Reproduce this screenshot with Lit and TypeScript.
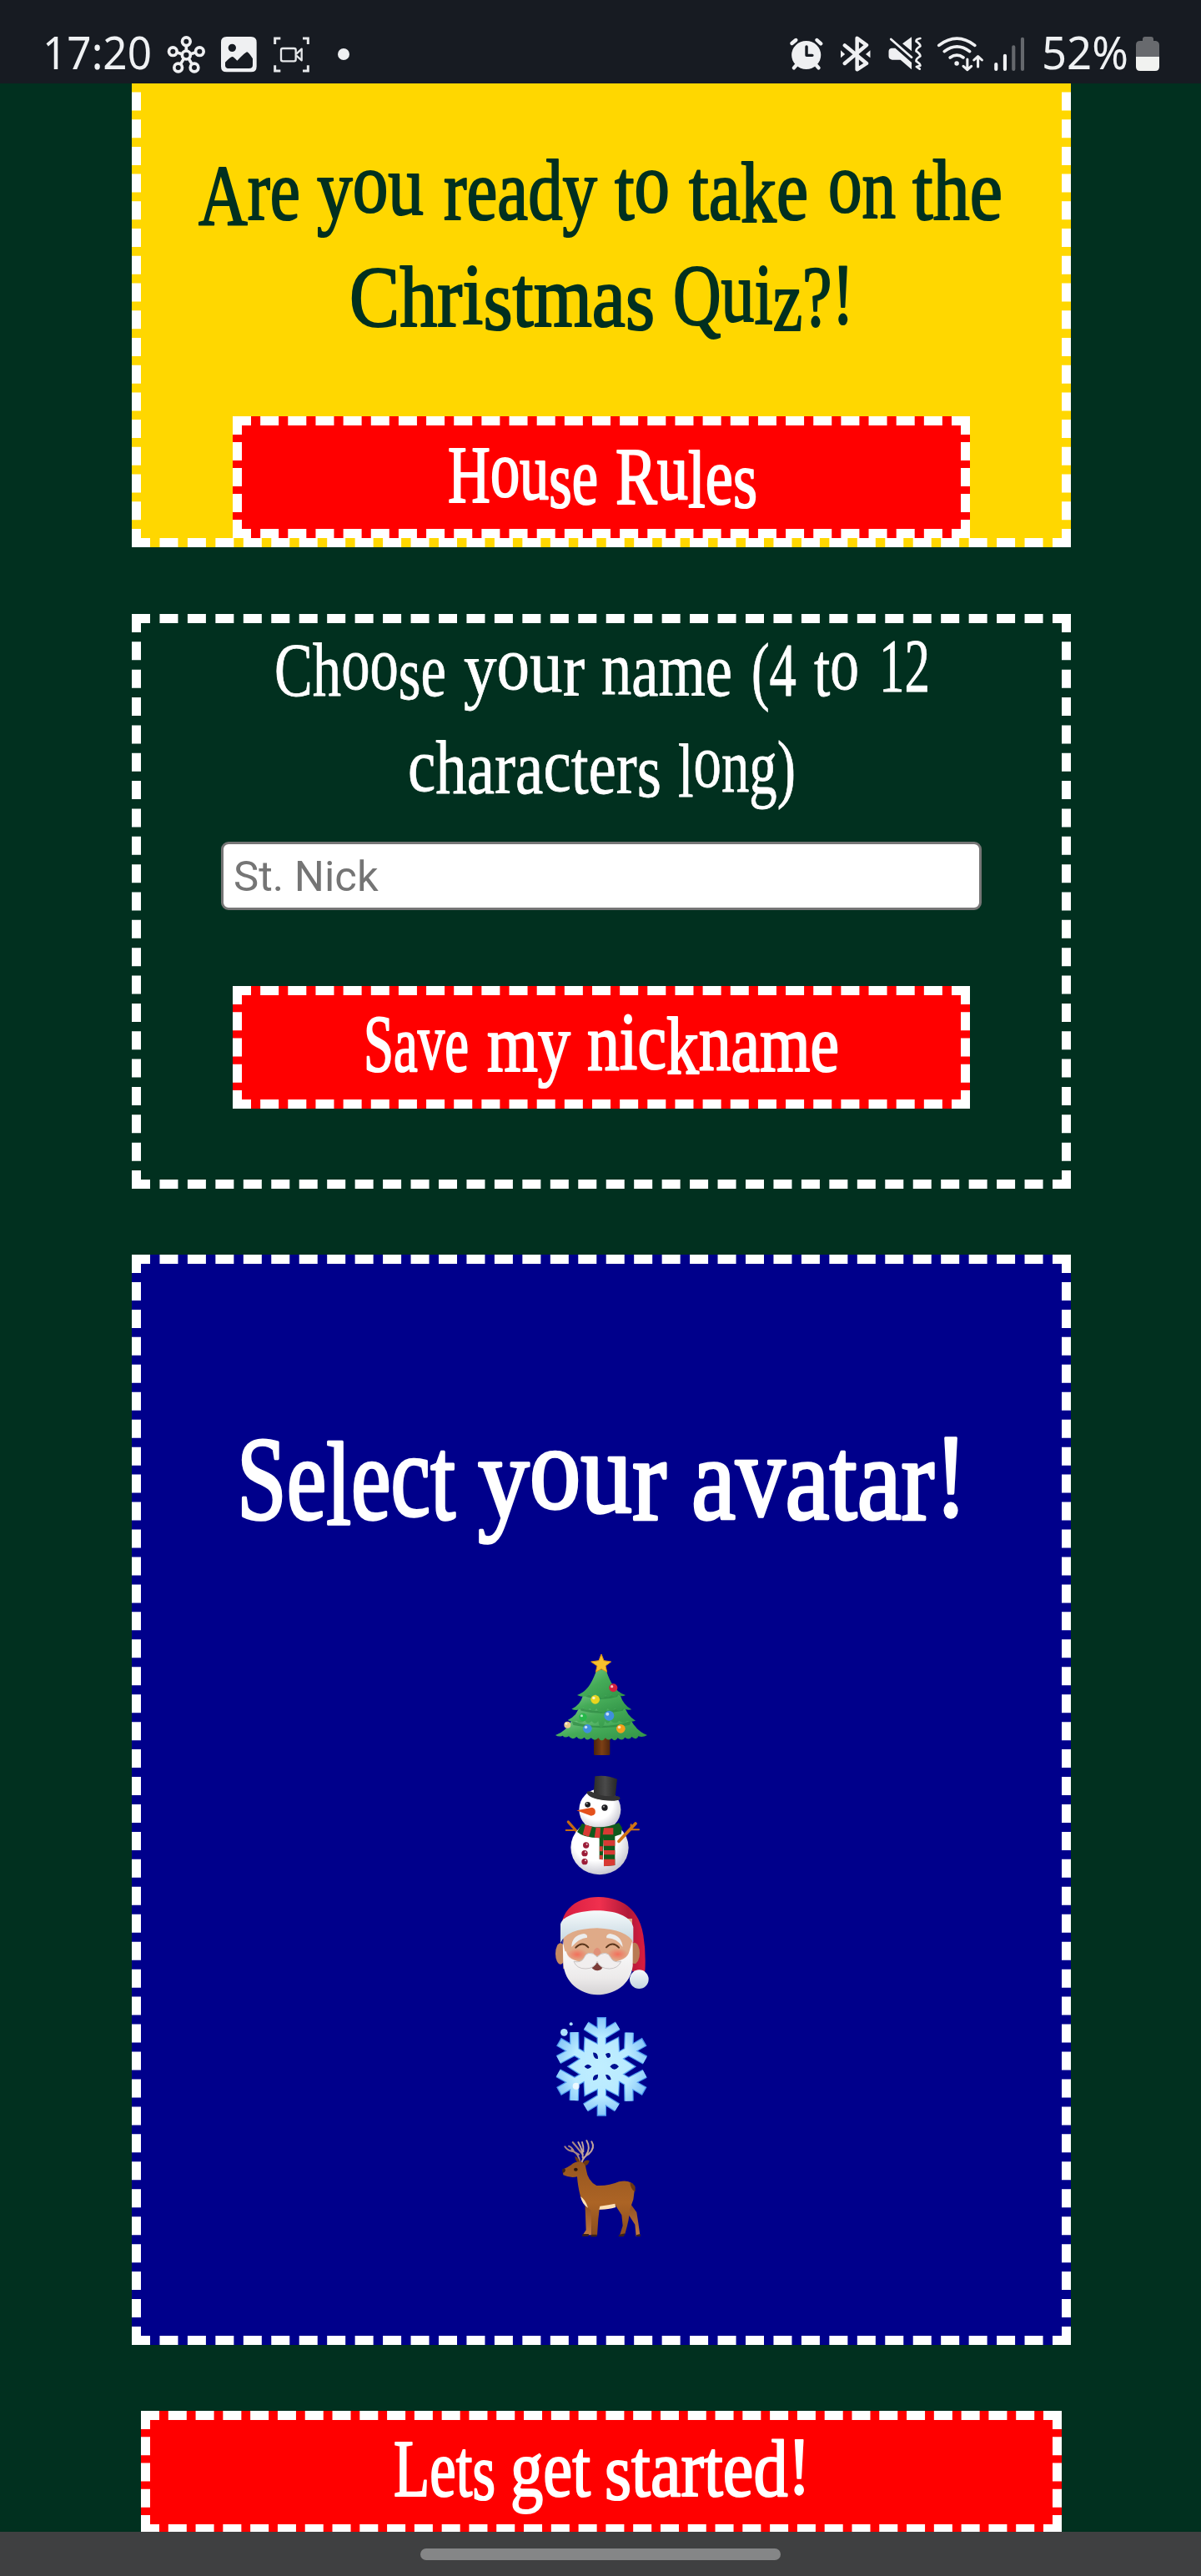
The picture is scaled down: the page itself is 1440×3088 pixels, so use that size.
import { LitElement, html, svg, css } from "lit";
import { customElement } from "lit/decorators.js";

/** A word with its left and right edge on the line. */
type Word = [string, number, number];

/** Vertical bounce of the lettering, as a fraction of the font size. */
const BOUNCE: Record<string, number> = {
  o: -0.09, u: -0.06, n: -0.02, v: -0.03, A: 0.07, y: -0.01, s: 0.04, l: 0.04,
  k: 0.03, H: -0.02, Q: -0.02, S: 0, z: 0.05, "!": -0.03, "1": -0.05, "2": -0.05, c: -0.03, i: -0.03,
};

const bounce = (word: string, size: number) => {
  let last = 0;
  return [...word]
    .map((ch) => {
      const off = (BOUNCE[ch] ?? 0) * size;
      const d = off - last;
      last = off;
      return d.toFixed(1);
    })
    .join(" ");
};

const line = (words: Word[], baseline: number, size: number) => svg`
  <text font-size=${size} y=${baseline}>${words.map(
    ([w, x1, x2]) => svg`<tspan x=${x1} y=${baseline} dy=${bounce(w, size)} textLength=${x2 - x1} lengthAdjust="spacingAndGlyphs">${w}</tspan> `
  )}</text>`;

const BALLS: [number, number, number, string][] = [
  [346, 190, 15, "#d5213f"], [281, 232, 16, "#e8d51f"], [237, 295, 14, "#27b84a"],
  [331, 290, 18, "#3f8fdd"], [253, 337, 16, "#3f8fdd"], [373, 337, 16, "#f3a01c"], [181, 323, 12, "#e8c98c"],
];

const tree = () => svg`
  <defs>
    <linearGradient id="leaf" x1="0" x2="1" y1="0" y2="1"><stop offset="0" stop-color="#7cc98a"/><stop offset=".45" stop-color="#45ab58"/><stop offset="1" stop-color="#2f9145"/></linearGradient>
    <linearGradient id="trunk" x1="0" x2="1"><stop offset="0" stop-color="#4a220e"/><stop offset=".5" stop-color="#7c3f14"/><stop offset="1" stop-color="#4e240e"/></linearGradient>
  </defs>
  <rect x="276" y="360" width="58" height="72" rx="4" fill="url(#trunk)"/>
  <path fill="url(#leaf)" d="M138 360Q180 345 200 300H406Q428 345 468 360Q452 370 436 364Q432 380 412 366Q404 380 388 368Q378 384 362 370Q354 386 340 372Q326 382 318 370Q304 388 292 370Q280 384 266 370Q250 384 242 368Q226 382 214 366Q198 380 186 364Q172 372 164 362Q150 368 138 360Z"/>
  <path fill="#27803c" d="M196 308Q300 346 412 308L404 324Q300 344 202 324Z" opacity=".6"/>
  <path fill="url(#leaf)" d="M182 306Q218 290 226 250H384Q394 290 426 308Q408 314 396 308Q382 322 368 308Q352 324 336 308Q326 326 316 310Q310 336 300 332Q294 328 292 310Q280 326 268 310Q254 324 244 308Q226 322 214 308Q196 314 182 306Z"/>
  <path fill="#27803c" d="M222 258Q300 288 388 258L380 272Q300 290 230 272Z" opacity=".6"/>
  <path fill="url(#leaf)" d="M196 266Q232 250 240 205H368Q378 250 412 268Q396 272 382 264Q366 280 352 264Q338 280 326 264Q314 286 302 276Q292 280 286 264Q272 284 262 264Q248 276 238 262Q216 276 196 266Z"/>
  <path fill="#27803c" d="M240 208Q300 234 368 208L360 222Q304 240 248 222Z" opacity=".6"/>
  <path fill="url(#leaf)" d="M216 216C258 202 272 160 284 132Q303 116 322 132C334 168 354 206 390 216Q376 224 362 214Q350 230 338 214Q328 232 318 216Q308 238 298 222Q288 226 282 212Q270 230 260 214Q244 228 216 216Z"/>
  <path fill="#f7c02d" stroke="#dc9312" stroke-width="3" stroke-linejoin="round" d="M303 69L312 92L338 96L318 111L323 133L303 122L283 133L288 111L266 96L294 92Z"/>
  ${BALLS.map(([x, y, r, c]) => svg`<circle cx=${x} cy=${y} r=${r} fill=${c}/><circle cx=${x - r / 3} cy=${y - r / 3} r=${r / 3} fill="#fff" opacity=".7"/>`)}`;

const snowman = () => svg`
  <defs>
    <radialGradient id="snow" cx=".42" cy=".35" r=".65"><stop offset=".6" stop-color="#fff"/><stop offset="1" stop-color="#c9c9d2"/></radialGradient>
    <linearGradient id="hat" x1="0" x2="1"><stop offset="0" stop-color="#2a2a2a"/><stop offset=".5" stop-color="#4a4a4a"/><stop offset="1" stop-color="#262626"/></linearGradient>
    <clipPath id="scarf"><path d="M234 677Q296 706 366 675L378 694L374 716L352 724V828L312 832V728L308 808L296 806V730Q240 730 216 708Z"/></clipPath>
  </defs>
  <g stroke="#c46a12" stroke-linecap="round" fill="none"><path stroke-width="10" d="M184 672L216 708"/><path stroke-width="6" d="M176 702H204"/></g>
  <ellipse cx="297" cy="764" rx="104" ry="98" fill="url(#snow)"/>
  <circle cx="298" cy="628" r="75" fill="url(#snow)"/>
  <g clip-path="url(#scarf)">
    <rect x="210" y="660" width="180" height="180" fill="#0f5a1c"/>
    <path fill="#d83a34" d="M246 680l24 8-12 38-22-8zM284 692l16 2-2 36-20-2zM312 694h34v24h-38zM310 738h46v20h-46zM310 774h46v16h-46zM310 806h46v30h-46zM296 760h12v18h-12zM296 792h12v20h-12z"/>
  </g>
  <g stroke="#d07514" stroke-linecap="round" fill="none"><path stroke-width="11" d="M366 742L426 678"/><path stroke-width="6" d="M404 700H438M410 696V682"/></g>
  <path fill="url(#hat)" d="M280 508Q320 502 360 518L352 590Q312 600 274 584Z"/>
  <path fill="#343434" d="M250 566Q256 558 274 566Q312 584 354 578Q374 580 370 590Q356 600 310 594Q256 586 250 566Z"/>
  <circle cx="254" cy="610" r="10" fill="#1c1c20"/><circle cx="315" cy="621" r="11" fill="#1c1c20"/>
  <circle cx="251" cy="606" r="3" fill="#aaa"/><circle cx="312" cy="617" r="3" fill="#aaa"/>
  <path fill="#e4511c" d="M214 631L270 620Q284 624 281 640Q278 650 266 650Z"/>
  <g fill="#9c1c38"><circle cx="248" cy="756" r="11"/><circle cx="243" cy="785" r="11"/><circle cx="243" cy="815" r="11"/></g>
  <g fill="#fff" opacity=".8"><circle cx="251" cy="752" r="3"/><circle cx="246" cy="781" r="3"/><circle cx="246" cy="811" r="3"/></g>`;

const santa = () => svg`
  <defs>
    <linearGradient id="red" x1="0" x2="1"><stop offset="0" stop-color="#d61c40"/><stop offset=".45" stop-color="#f0304e"/><stop offset=".8" stop-color="#b01838"/><stop offset="1" stop-color="#dc1c40"/></linearGradient>
    <linearGradient id="fur" x1="0" x2="0" y1="0" y2="1"><stop offset="0" stop-color="#f6fafb"/><stop offset="1" stop-color="#c4d6e0"/></linearGradient>
    <linearGradient id="beard" x1="0" x2="0" y1="0" y2="1"><stop offset="0" stop-color="#fff"/><stop offset=".7" stop-color="#eceaea"/><stop offset="1" stop-color="#d4d2d4"/></linearGradient>
    <radialGradient id="cheek"><stop offset="0" stop-color="#f2705c"/><stop offset="1" stop-color="#f2705c" stop-opacity="0"/></radialGradient>
  </defs>
  <path fill="url(#red)" d="M160 140C170 74 230 42 292 42C386 44 440 92 454 180Q464 240 460 310H414L400 150Z"/>
  <ellipse cx="156" cy="246" rx="18" ry="38" fill="#c48862"/><ellipse cx="422" cy="244" rx="19" ry="38" fill="#b87a54"/>
  <path fill="#dfaa88" d="M166 120H414V300H166Z"/>
  <path fill="url(#beard)" d="M164 195Q172 250 176 236Q184 272 240 276H336Q396 272 404 236L416 195V290C408 358 350 393 288 394C226 392 170 350 166 280Z"/>
  <ellipse cx="216" cy="249" rx="38" ry="22" fill="url(#cheek)"/><ellipse cx="362" cy="248" rx="38" ry="22" fill="url(#cheek)"/>
  <path fill="#7c3c38" d="M262 286Q288 272 314 286Q304 308 288 307Q270 306 262 286Z"/>
  <path fill="#f1eeee" stroke="#c9c4c4" stroke-width="3" d="M288 258Q276 242 258 244Q246 246 240 262Q230 280 204 274Q214 300 246 300Q278 300 288 274Q298 300 332 300Q362 300 374 274Q348 280 338 262Q330 244 316 244Q300 244 288 258Z"/>
  <path fill="#e09078" d="M274 242Q278 226 288 224Q298 226 302 242Q294 254 288 252Q280 254 274 242Z"/>
  <path fill="#ececec" d="M196 222Q196 180 240 174Q254 176 252 188Q222 190 196 222ZM380 222Q376 180 334 174Q318 178 322 190Q356 188 380 222Z"/>
  <path fill="none" stroke="#5a361c" stroke-width="6" stroke-linecap="round" d="M211 224Q234 200 256 223M321 223Q344 200 366 224"/>
  <path fill="url(#fur)" d="M156 140C172 80 398 66 418 150V206Q396 160 288 154Q178 156 156 208Z"/>
  <circle cx="439" cy="338" r="34" fill="url(#fur)"/>`;

const ARMS = [0, 60, 120, 180, 240, 300];
const STAR = ARMS.flatMap((a) =>
  [[a, 118], [a + 30, 72]].map(([deg, r]) => {
    const t = (deg * Math.PI) / 180;
    return `${(304 + r * Math.cos(t)).toFixed(1)},${(652 + r * Math.sin(t)).toFixed(1)}`;
  })
).join(" ");

const snowflake = () => svg`
  <defs><radialGradient id="ice" gradientUnits="userSpaceOnUse" cx="304" cy="652" r="180"><stop offset="0" stop-color="#c0eeff"/><stop offset=".6" stop-color="#b8eaff"/><stop offset="1" stop-color="#84c4f8"/></radialGradient></defs>
  ${([["#4e9af0", 34], ["url(#ice)", 27]] as [string, number][]).map(
    ([c, w]) => svg`
      <polygon points=${STAR} fill=${c} stroke=${c} stroke-width=${w - 26}/>
      <g stroke=${c} stroke-width=${w} fill="none">
      ${ARMS.map(
        (a) => svg`<path transform="rotate(${a} 304 652)" d="M303.500 652L304 ${w === 34 ? 474 : 478}M248 505L304 540L362 505"/>`
      )}</g>`
  )}
  <path fill="#00108f" d="M334 652Q350 632 366 652Q350 672 334 652ZM242 652Q254 636 268 652Q254 668 242 652ZM273 602Q291 600 291 624Q275 626 273 602ZM318 607Q337 595 336 616Q324 630 318 607ZM273 701Q271 680 291 680Q293 702 273 701ZM318 681Q335 680 338 698Q324 706 318 681Z"/>
  <circle cx="169" cy="529" r="13" fill="#aee0ff"/><circle cx="194" cy="499" r="6" fill="#aee0ff"/><circle cx="212" cy="722" r="12" fill="#fff" opacity=".75"/>`;

const deer = () => svg`
  <defs>
    <linearGradient id="fawn" x1="0" x2="0" y1="0" y2="1"><stop offset="0" stop-color="#97561f"/><stop offset=".55" stop-color="#ac6425"/><stop offset="1" stop-color="#8b4d1d"/></linearGradient>
    <linearGradient id="leg" x1="0" x2="0" y1="0" y2="1"><stop offset="0" stop-color="#8e4e20"/><stop offset="1" stop-color="#c07840"/></linearGradient>
  </defs>
  <path fill="url(#leg)" d="M244 1140L272 1150L268 1220V1258H236L248 1240ZM404 1140L430 1176L436 1214L442 1258L428 1262L424 1220L398 1180Z"/>
  <g fill="none" stroke="#a98783" stroke-width="6" stroke-linecap="round"><path d="M226 996Q222 966 204 958Q182 956 172 940M204 958Q200 944 186 938M236 968Q214 940 200 924M222 968Q206 962 196 950"/><path stroke="#c1a39c" d="M232 998Q238 976 258 966Q282 944 268 922M236 980Q238 956 220 924M248 970Q266 946 250 918M238 958Q240 940 234 924"/></g>
  <path fill="#6b3713" d="M236 998Q246 984 260 990Q258 1006 242 1010ZM222 1000Q208 990 208 974Q224 982 228 998Z"/>
  <path fill="url(#fawn)" d="M164 1022Q180 1016 194 1006Q206 994 226 994Q246 998 248 1020Q254 1064 286 1080Q330 1082 366 1066Q408 1056 424 1084L418 1130L406 1164Q404 1200 388 1254L368 1262L380 1224L376 1186L352 1148L296 1166L292 1200L288 1260H268L266 1170Q242 1150 228 1120Q218 1080 216 1048Q192 1054 166 1042Z"/>
  <path fill="#6b3713" d="M406 1068Q428 1074 425 1102Q414 1098 408 1080Z"/>
  <path fill="#ffe1b5" d="M228 1119Q246 1130 255 1160Q234 1148 228 1119ZM298 1154Q330 1150 352 1145L355 1158Q320 1168 295 1166Z"/>
  <path fill="#3c2218" d="M163 1020Q174 1016 174 1026Q170 1036 163 1034ZM236 1254H258L256 1262H234ZM268 1256H288L286 1264H264ZM368 1256L388 1252L384 1263H364ZM428 1258L442 1254L444 1263H430Z"/>
  <ellipse cx="211" cy="1022" rx="7" ry="6" fill="#2b1710"/>`;

const AVATARS = [
  { name: "tree", top: 30, draw: tree },
  { name: "snowman", top: 468, draw: snowman },
  { name: "santa", top: 6, draw: santa },
  { name: "snowflake", top: 444, draw: snowflake },
  { name: "deer", top: 882, draw: deer },
];

@customElement("app-root")
export class AppRoot extends LitElement {
  static styles = css`
    :host { display: block; }
    * { box-sizing: border-box; }
    .screen { display: flex; flex-direction: column; width: 1440px; height: 3088px; background: #01301f; overflow: hidden; }
    svg { display: block; flex: none; overflow: visible; }
    .status { flex: none; height: 100px; display: flex; justify-content: space-between; background: #171b22; color: #eff1f3; font-family: "Noto Sans", "Open Sans", sans-serif; }
    .group { display: flex; }
    .icon { fill: #eff0f2; stroke: none; }
    .label { fill: #eff1f3; font-size: 54px; }
    .page { flex: 1; min-height: 0; overflow: hidden; display: flex; flex-direction: column; align-items: center; }
    .card { flex: none; width: 1126px; margin-left: 2px; border: 11px dashed #fff; display: flex; flex-direction: column; align-items: center; }
    .intro { height: 611px; margin-top: -55px; background: #ffd700; }
    .nickname { height: 689px; margin-top: 80px; }
    .avatars { height: 1307px; margin-top: 79px; background: #00008b; }
    .avatar { margin-right: 2px; }
    .btn { flex: none; width: 884px; height: 146px; padding: 0; border: 11px dashed #fff; background: #f00; border-radius: 0; display: flex; justify-content: center; }
    .btn.save { height: 147px; margin-top: 91px; }
    .btn.start { width: 1104px; height: 147px; margin: 79px 0 0 2px; }
    .script { font-family: "Mountains of Christmas", "Liberation Serif", serif; fill: #fff; stroke: #fff; stroke-width: 2.2px; stroke-linejoin: round; }
    .script.dark { fill: #01301f; stroke: #01301f; }
    .script.thin { stroke-width: 0.8px; }
    .script.big { stroke-width: 3.5px; }
    .field { width: 912px; height: 82px; padding: 0 12px; border: 3px solid #767676; border-radius: 9px; background: #fff; font: 50.8px/1 Roboto, sans-serif; color: #000; }
    .field::placeholder { color: #757575; opacity: 1; }
    .nav { flex: none; height: 53px; background: #3f4041; display: flex; justify-content: center; padding-top: 20px; }
    .pill { width: 432px; height: 14px; border-radius: 7px; background: #858687; }
  `;

  private statusBar() {
    return html`
      <header class="status">
        <div class="group">
          <svg width="200" height="100" viewBox="0 0 200 100"><text class="label" x="51" y="82.500" textLength="131" lengthAdjust="spacingAndGlyphs">17:20</text></svg>
          <svg class="icon" width="60" height="100" viewBox="600 0 180 300">
            <g fill="none" stroke="#eff0f2" stroke-width="11">
              <circle cx="670" cy="198" r="15"/><circle cx="670" cy="149" r="14.500"/><circle cx="622" cy="185" r="14.500"/><circle cx="718" cy="185" r="14.500"/><circle cx="641" cy="243" r="14.500"/><circle cx="699" cy="243" r="14.500"/>
              <path d="M670 164V183M637 189L655 194M703 189L685 194M650 230L661 211M690 230L679 211"/>
            </g>
          </svg>
          <svg class="icon" width="60" height="100" viewBox="780 0 180 300">
            <path fill-rule="evenodd" d="M815 132H903Q923 132 923 152V239Q923 259 903 259H815Q795 259 795 239V152Q795 132 815 132ZM835 158A14 14 0 1 0 835 186A14 14 0 1 0 835 158ZM810 224V236Q811 246 824 246H896Q909 246 909 234V211Q893 186 888 187Q884 187 853 218Q840 203 835 204Q829 205 810 224Z"/>
          </svg>
          <svg width="120" height="100" viewBox="960 0 360 300" fill="none" stroke="#e6e8ea" stroke-width="9">
            <path d="M989 159V138H1009M1089 138H1108V159M1108 235V255H1089M1009 255H989V235"/>
            <rect x="1011" y="174" width="53" height="46" rx="6" stroke-width="7"/><path stroke-width="7" stroke-linejoin="round" d="M1066 194L1085 176V217L1066 200"/>
            <circle cx="1236" cy="195" r="21" fill="#eff0f2" stroke="none"/>
          </svg>
        </div>
        <div class="group">
          <svg class="icon" width="293" height="100" viewBox="130 0 851 300" preserveAspectRatio="none">
            <circle cx="193" cy="198" r="51"/>
            <path fill="none" stroke="#eff0f2" stroke-width="13" stroke-linecap="round" d="M143 156L157 144M230 144L244 157M157 236L150 244M229 236L236 244"/>
            <path fill="none" stroke="#171b22" stroke-width="10" stroke-linecap="round" stroke-linejoin="round" d="M194 168V199H214"/>
            <path fill="none" stroke="#eff0f2" stroke-width="13" stroke-linecap="round" stroke-linejoin="round" d="M327 163L403 228L370 250V137L403 162L327 228"/>
            <path d="M313 181L328 195L313 208ZM416 181L400 195L416 208Z"/>
            <path d="M480 185Q480 174 490 173H503L560 225V250L521 215H492Q480 213 480 202ZM528 157L560 133V184Z"/>
            <path fill="none" stroke="#eff0f2" stroke-width="8" stroke-linecap="round" stroke-linejoin="round" d="M488 141L560 206M590 138Q574 141 576 149Q590 158 590 166Q574 176 576 184Q590 193 590 202Q574 212 576 220Q590 229 590 236L577 240L588 248"/>
            <path fill="none" stroke="#eff0f2" stroke-width="11" stroke-linecap="round" d="M655 163Q718 114 780 163M674 185Q718 150 762 185M694 207Q718 190 740 207"/>
            <circle cx="717" cy="228" r="8"/>
            <path fill="none" stroke="#eff0f2" stroke-width="9" stroke-linecap="round" stroke-linejoin="round" d="M754 213V251M740 238L754 251L768 238M791 240V205M777 216L791 203L805 216"/>
            <g fill="none" stroke-width="12" stroke-linecap="round"><path stroke="#eff0f2" d="M854 231V249M885 200V249"/><path stroke="#65686d" d="M915 169V249M946 140V249"/></g>
          </svg>
          <svg width="202" height="100" viewBox="1238 0 202 100">
            <text class="label" x="1249" y="82.500" textLength="104" lengthAdjust="spacingAndGlyphs">52%</text>
            <path fill="#686a6e" d="M1362 68V54Q1362 49 1367 49H1370V47Q1370 44 1373 44H1380Q1383 44 1383 47V49H1386Q1390 50 1390 54V68Z"/>
            <path fill="#f1f2f0" d="M1362 68H1390V80Q1390 85 1385 85H1367Q1362 85 1362 80Z"/>
          </svg>
        </div>
      </header>`;
  }

  render() {
    return html`
      <div class="screen">
        ${this.statusBar()}
        <main class="page">
          <section class="card intro">
            <svg class="script dark" width="1104" height="443" viewBox="169 56 1104 443">
              ${line([["Are", 238, 360], ["you", 380, 508], ["ready", 532, 716], ["to", 737, 803], ["take", 826, 969], ["on", 993, 1074], ["the", 1094, 1202]], 263, 104)}
              ${line([["Christmas", 419, 785], ["Quiz?!", 807, 1024]], 391, 104)}
            </svg>
            <button class="btn">
              <svg class="script" width="862" height="124" viewBox="290 510 862 124">${line([["House", 537, 717], ["Rules", 738, 908]], 604, 98)}</svg>
            </button>
          </section>
          <section class="card nickname">
            <svg class="script thin" width="1104" height="262" viewBox="169 747 1104 262">
              ${line([["Choose", 329, 535], ["your", 556, 701], ["name", 721, 878], ["(4", 901, 955], ["to", 976, 1030], ["12", 1054, 1115]], 834, 92)}
              ${line([["characters", 489, 793], ["long)", 813, 954]], 951, 92)}
            </svg>
            <input class="field" placeholder="St. Nick" />
            <button class="btn save">
              <svg class="script" width="862" height="125" viewBox="290 1193 862 125">${line([["Save", 436, 562], ["my", 584, 684], ["nickname", 704, 1006]], 1284, 98)}</svg>
            </button>
          </section>
          <section class="card avatars">
            <svg class="script big" width="1104" height="455" viewBox="169 1515 1104 455">
              ${line([["Select", 284, 546], ["your", 573, 799], ["avatar!", 829, 1160]], 1821, 142)}
            </svg>
            ${AVATARS.map((a) => html`<svg class="avatar" width="200" height="146" viewBox="0 ${a.top} 600 438">${a.draw()}</svg>`)}
          </section>
          <button class="btn start">
            <svg class="script" width="1082" height="125" viewBox="180 2901 1082 125">${line([["Lets", 472, 594], ["get", 612, 708], ["started!", 725, 972]], 2992, 98)}</svg>
          </button>
        </main>
        <footer class="nav"><div class="pill"></div></footer>
      </div>`;
  }
}
